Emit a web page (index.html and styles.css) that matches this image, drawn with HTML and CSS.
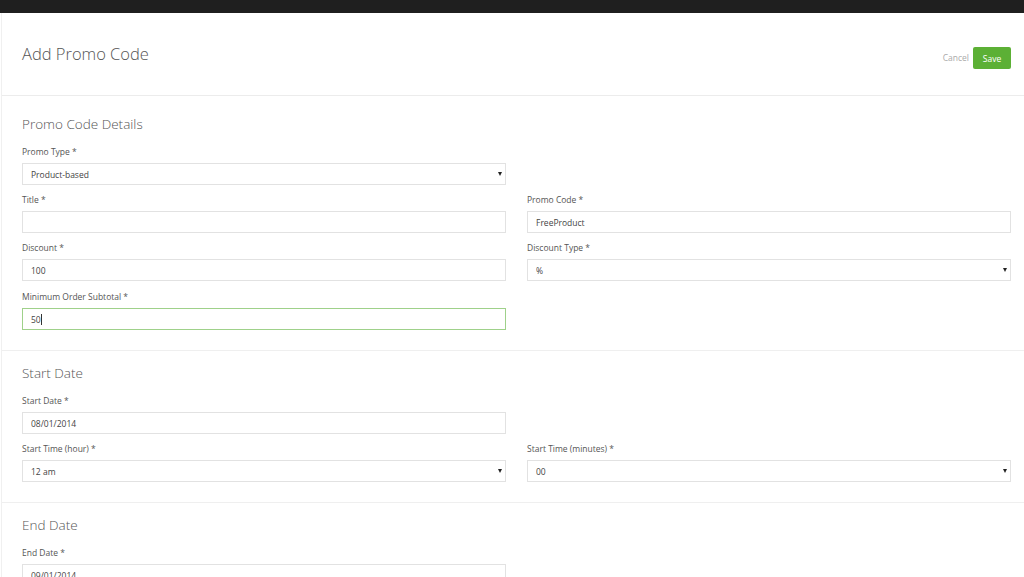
FILE: index.html
```
<!DOCTYPE html>
<html lang="en">
<head>
  <meta charset="UTF-8">
  <meta name="viewport" content="width=device-width, initial-scale=1.0">
  <title>Add Promo Code</title>
  <link rel="stylesheet" href="styles.css">
</head>
<body>
  <div class="topbar"></div>

  <div class="page">
    <div class="page-header">
      <h1>Add Promo Code</h1>
      <div class="actions">
        <a href="#" class="cancel">Cancel</a>
        <button class="save">Save</button>
      </div>
    </div>

    <div class="section first">
      <h2>Promo Code Details</h2>
      <div class="form-grid">
        <div class="field">
          <label>Promo Type *</label>
          <div class="select-wrap">
            <select><option>Product-based</option></select>
          </div>
        </div>
        <div></div>

        <div class="field">
          <label>Title *</label>
          <input type="text" value="">
        </div>
        <div class="field">
          <label>Promo Code *</label>
          <input type="text" value="FreeProduct">
        </div>

        <div class="field">
          <label>Discount *</label>
          <input type="text" value="100">
        </div>
        <div class="field">
          <label>Discount Type *</label>
          <div class="select-wrap">
            <select><option>%</option></select>
          </div>
        </div>

        <div class="field">
          <label>Minimum Order Subtotal *</label>
          <div class="input-fake focused">50<span class="caret"></span></div>
        </div>
        <div></div>
      </div>
    </div>

    <div class="section">
      <h2>Start Date</h2>
      <div class="form-grid">
        <div class="field">
          <label>Start Date *</label>
          <input type="text" value="08/01/2014">
        </div>
        <div></div>

        <div class="field">
          <label>Start Time (hour) *</label>
          <div class="select-wrap">
            <select><option>12 am</option></select>
          </div>
        </div>
        <div class="field">
          <label>Start Time (minutes) *</label>
          <div class="select-wrap">
            <select><option>00</option></select>
          </div>
        </div>
      </div>
    </div>

    <div class="section">
      <h2>End Date</h2>
      <div class="form-grid">
        <div class="field">
          <label>End Date *</label>
          <input type="text" value="09/01/2014">
        </div>
        <div></div>
      </div>
    </div>
  </div>
</body>
</html>
```

FILE: styles.css
```
body {
  margin: 0;
  background: #fff;
  font-family: "Open Sans", "Noto Sans", sans-serif;
  color: #444;
  overflow: hidden;
}
.topbar {
  height: 13px;
  background: #1f1f1f;
}
.page {
  margin-left: 1px;
  border-left: 1px solid #f0f0f0;
}
.page-header {
  height: 82px;
  display: flex;
  align-items: center;
  justify-content: space-between;
  padding: 0 13px 0 20px;
  border-bottom: 1px solid #ececec;
}
.page-header h1 {
  margin: 0 0 2px;
  font-size: 16.5px;
  font-weight: 300;
  color: #555;
}
.actions {
  display: flex;
  align-items: center;
  gap: 4px;
  margin-top: 8px;
}
.cancel {
  font-size: 8.5px;
  color: #aaa;
  text-decoration: none;
  margin-bottom: 2px;
}
.save {
  width: 38px;
  height: 22px;
  border: none;
  border-radius: 2px;
  background: #5cb035;
  color: #fff;
  font-family: inherit;
  font-size: 8.5px;
  padding: 0;
}
.section {
  padding: 13px 13px 20px 20px;
  border-bottom: 1px solid #efefef;
}
.section.first {
  padding-top: 19px;
}
.section.first .form-grid .field:nth-child(7) {
  margin-top: 1px;
}
.section h2 {
  margin: 0 0 13px;
  font-size: 13.5px;
  line-height: 18px;
  font-weight: 300;
  color: #555;
}
.form-grid {
  display: grid;
  grid-template-columns: 1fr 1fr;
  column-gap: 21px;
  row-gap: 9px;
}
.field label {
  display: block;
  font-size: 8.5px;
  line-height: 12px;
  margin-bottom: 5px;
  color: #555;
}
.field input,
.field select,
.input-fake {
  display: block;
  box-sizing: border-box;
  width: 100%;
  height: 22px;
  margin: 0;
  padding: 0 8px;
  border: 1px solid #e2e2e2;
  border-radius: 0;
  background: #fff;
  font-family: inherit;
  font-size: 8.5px;
  color: #444;
  outline: none;
}
.input-fake {
  display: flex;
  align-items: center;
}
.input-fake.focused {
  border-color: #9fd18a;
}
.caret {
  display: inline-block;
  width: 1px;
  height: 11px;
  background: #333;
}
.field select {
  appearance: none;
  -webkit-appearance: none;
}
.select-wrap {
  position: relative;
}
.select-wrap::after {
  content: "";
  position: absolute;
  right: 4px;
  top: 9px;
  border-left: 2.5px solid transparent;
  border-right: 2.5px solid transparent;
  border-top: 4px solid #222;
  pointer-events: none;
}
```
